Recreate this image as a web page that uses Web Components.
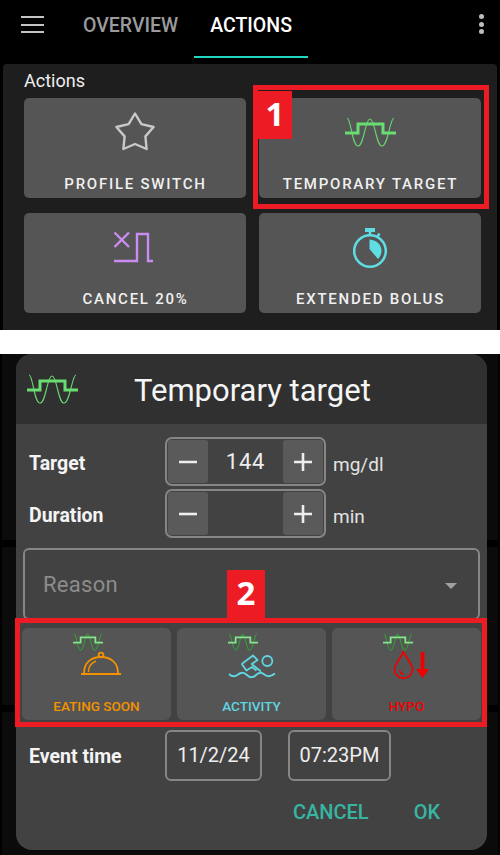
<!DOCTYPE html>
<html>
<head>
<meta charset="utf-8">
<title>Temporary target</title>
<style>
  html, body { margin: 0; background: #000; }
  body { width: 500px; height: 855px; overflow: hidden; position: relative; font-family: Roboto, "Liberation Sans", sans-serif; }
  .gap { height: 24px; background: #fff; }
</style>
</head>
<body>
<top-bar></top-bar>
<actions-panel>
  <action-card icon="star">PROFILE SWITCH</action-card>
  <action-card icon="tt">TEMPORARY TARGET</action-card>
  <action-card icon="cancel">CANCEL 20%</action-card>
  <action-card icon="timer">EXTENDED BOLUS</action-card>
</actions-panel>
<div class="gap"></div>
<tt-dialog>
  <preset-card icon="cloche" style="--accent:#f39200">EATING SOON</preset-card>
  <preset-card icon="swim" style="--accent:#5fd6e2">ACTIVITY</preset-card>
  <preset-card icon="hypo" style="--accent:#f00000">HYPO</preset-card>
</tt-dialog>
<call-out num="1" style="left:253px;top:85px;width:226px;height:114px"></call-out>
<call-out num="2" mode="above" style="left:15px;top:618px;width:462px;height:99px"></call-out>

<script>
// viewBox + inner svg for every drawn icon
const ICONS = {
  star: ['0 0 60 48', `<path d="M30 5.5 L36.4 16.2 L48.6 19 L40.4 28.4 L41.6 41 L30 36 L18.4 41 L19.6 28.4 L11.4 19 L23.6 16.2 Z" fill="none" stroke="#c9c9c9" stroke-width="2.4" stroke-linejoin="round"/>`],
  tt: ['0 0 60 48', `<g transform="translate(5 9)"><path d="M2 1 C6 1 7 29 13 29 C19 29 20 2 25 2 C30 2 31 29 37 29 C43 29 45 1 49 1" fill="none" stroke="#66d36e" stroke-width="1.2"/><path d="M0 16 H13 V7 H38 V16 H51" fill="none" stroke="#69dc72" stroke-width="3"/></g>`],
  cancel: ['0 0 60 48', `<g fill="none" stroke="#c98cf0" stroke-width="2.4"><path d="M9.5 9.5 L24 24 M24 9.5 L9.5 24"/><path d="M9 38 H32 V11 H43 V38 H48"/></g>`],
  timer: ['0 0 60 48', `<g fill="none" stroke="#5fdde5" stroke-width="2.5"><circle cx="30" cy="28" r="15.8"/><path d="M30 12 V8"/><path d="M37.5 13.5 L39.5 10.5"/></g><path d="M25 5 H35 V9 H25 Z" fill="#5fdde5"/><path d="M29.5 16.5 C37 17 41.5 22 41.5 28 C41.5 31 40 34 38 36 L29.5 26 Z" fill="#5fdde5"/>`],
  cloche: ['66 650 61 32', `<g fill="none" stroke="#f39200" stroke-width="1.8"><path d="M81 674 H121"/><path d="M84 673 C84 662 92 657 101 657 C110 657 118 662 118 673"/><circle cx="101" cy="655" r="2.4"/><path d="M88.5 672 C88.5 667 91 663 96 661" stroke-width="1.4"/></g>`],
  swim: ['221 650 61 32', `<g fill="none" stroke="#5fd6e2" stroke-width="1.8" stroke-linejoin="round"><circle cx="267.3" cy="661" r="5"/><path d="M241.7 664 L253 655.5 L257.5 660 L251.7 664 L261 671.5 M241.7 664 L246.5 670.5 L252 667 L256.5 670.5"/><path d="M229 674 C232 677 235 677 238 674.5 C241 672 244 672 247 675 C250 678 253 678 256 675 C259 672 262 672 265 675 C268 677 272 676 275 673.5"/></g>`],
  hypo: ['376 650 61 32', `<g fill="none" stroke="#f00000" stroke-width="1.7"><path d="M403.5 652 C399 660 394.5 665 394.5 669.5 A9 8.8 0 0 0 412.5 669.5 C412.5 665 408 660 403.5 652 Z"/><path d="M399.5 670 C400 672.5 402 674 404 674.5" stroke-width="1.3"/></g><path d="M420.6 652 H424.4 V669 H429 L422.5 678 L416 669 H420.6 Z" fill="#f00000"/>`]
};

class IconBox extends HTMLElement {
  connectedCallback() {
    const [box, inner] = ICONS[this.getAttribute('name')];
    const [, , w, h] = box.split(' ');
    this.attachShadow({ mode: 'open' });
    this.shadowRoot.innerHTML = `
      <style>:host { display: block; width: ${w}px; height: ${h}px; } svg { display: block; }</style>
      <svg width="${w}" height="${h}" viewBox="${box}">${inner}</svg>`;
  }
}

// the target/wave logo on its own, sized by attributes
class TtLogo extends HTMLElement {
  connectedCallback() {
    const w = this.getAttribute('w') || 51;
    const h = this.getAttribute('h') || 30;
    const line = this.getAttribute('line') || '#69dc72';
    const wave = this.getAttribute('wave') || '#66d36e';
    this.attachShadow({ mode: 'open' });
    this.shadowRoot.innerHTML = `
      <style>:host { display: block; width: ${w}px; height: ${h}px; } svg { display: block; }</style>
      <svg width="${w}" height="${h}" viewBox="0 0 51 30">
        <path d="M2 1 C6 1 7 29 13 29 C19 29 20 2 25 2 C30 2 31 29 37 29 C43 29 45 1 49 1" fill="none" stroke="${wave}" stroke-width="${this.getAttribute('wavew') || 1.2}"/>
        <path d="M0 16 H13 V7 H38 V16 H51" fill="none" stroke="${line}" stroke-width="3"/>
      </svg>`;
  }
}

class TopBar extends HTMLElement {
  connectedCallback() {
    this.attachShadow({ mode: 'open' });
    this.shadowRoot.innerHTML = `
      <style>
        :host { display: flex; height: 64px; background: #000; font: 500 19.5px Roboto, sans-serif; }
        .burger { width: 67px; box-sizing: border-box; padding: 16px 0 0 21px; display: flex; flex-direction: column; gap: 5.5px; }
        .burger i { display: block; width: 23px; height: 2px; background: #c4c4c4; }
        .tab { height: 58px; box-sizing: border-box; padding: 15px 16px 0; line-height: 22px; color: #9b9b9b; }
        .tab.on { color: #fff; border-bottom: 2px solid #1fd8c1; }
        .dots { margin-left: auto; padding: 14px 16px 0 0; display: flex; flex-direction: column; gap: 2.5px; }
        .dots i { display: block; width: 5px; height: 5px; border-radius: 50%; background: #bdbdbd; }
      </style>
      <div class="burger"><i></i><i></i><i></i></div>
      <div class="tab">OVERVIEW</div>
      <div class="tab on">ACTIONS</div>
      <div class="dots"><i></i><i></i><i></i></div>`;
  }
}

class ActionsPanel extends HTMLElement {
  connectedCallback() {
    this.attachShadow({ mode: 'open' });
    this.shadowRoot.innerHTML = `
      <style>
        :host { display: block; height: 266px; box-sizing: border-box; margin: 0 3px; padding: 6px 0 0 21px; background: #1e1e1e; border-radius: 4px 4px 0 0; }
        h2 { margin: 0; font: 400 18px/22px Roboto, sans-serif; color: #eee; }
        .grid { display: grid; grid-template-columns: 222px 222px; grid-auto-rows: 100px; column-gap: 13px; row-gap: 15px; margin-top: 6px; }
      </style>
      <h2>Actions</h2>
      <div class="grid"><slot></slot></div>`;
  }
}

class ActionCard extends HTMLElement {
  connectedCallback() {
    this.attachShadow({ mode: 'open' });
    this.shadowRoot.innerHTML = `
      <style>
        :host { display: flex; flex-direction: column; align-items: center; background: #555; border-radius: 5px; padding-top: 10px; box-sizing: border-box;
                font: 500 15px/16px Roboto, sans-serif; letter-spacing: 1.75px; color: #f0f0f0; }
        .label { margin-top: auto; padding: 0 0 6px 1px; }
      </style>
      <icon-box name="${this.getAttribute('icon')}"></icon-box>
      <div class="label"><slot></slot></div>`;
  }
}

class PresetCard extends HTMLElement {
  connectedCallback() {
    this.attachShadow({ mode: 'open' });
    this.shadowRoot.innerHTML = `
      <style>
        :host { display: flex; flex-direction: column; align-items: center; background: #555; border-radius: 6px; padding-top: 5px; box-sizing: border-box;
                font: 500 13.5px/16px Roboto, sans-serif; color: var(--accent); }
        tt-logo { margin-right: 18px; }
        icon-box { margin-top: -1px; }
        .label { margin-top: auto; padding-bottom: 6px; }
      </style>
      <tt-logo w="30" h="18" line="#86e48e" wave="#2fa332" wavew="1.8"></tt-logo>
      <icon-box name="${this.getAttribute('icon')}"></icon-box>
      <div class="label"><slot></slot></div>`;
  }
}

class NumStepper extends HTMLElement {
  connectedCallback() {
    const value = this.getAttribute('value') || '';
    this.attachShadow({ mode: 'open' });
    this.shadowRoot.innerHTML = `
      <style>
        :host { display: flex; width: 161px; height: 49px; box-sizing: border-box; border: 2px solid #868686; border-radius: 7px; padding: 1px; font: 400 22px/40px Roboto, sans-serif; color: #eee; }
        .btn { width: 40px; background: #5a5a5a; border-radius: 3px; display: flex; align-items: center; justify-content: center; }
        .val { flex: 1; text-align: center; height: 43px; line-height: 43px; letter-spacing: .8px; }
        svg { display: block; }
      </style>
      <div class="btn"><svg width="18" height="18"><path d="M0 9 H18" stroke="#eee" stroke-width="2.6"/></svg></div>
      <div class="val">${value}</div>
      <div class="btn"><svg width="18" height="18"><path d="M0 9 H18 M9 0 V18" stroke="#eee" stroke-width="2.6"/></svg></div>`;
  }
}

class TtDialog extends HTMLElement {
  connectedCallback() {
    this.attachShadow({ mode: 'open' });
    this.shadowRoot.innerHTML = `
      <style>
        /* dim panels of the screen behind the dialog show at its sides */
        :host { display: block; height: 501px; box-sizing: border-box; padding-left: 16px;
                background: linear-gradient(#000 0 0) 0 186px / 100% 7px no-repeat, linear-gradient(#000 0 0) 0 351px / 100% 7px no-repeat, linear-gradient(#0b0b0b 0 0) 2px 0 / 496px 100% no-repeat, #000;
                font-family: Roboto, sans-serif; color: #fff; }
        .box { width: 471px; height: 496px; border-radius: 16px; overflow: hidden; background: #424242; }
        header { height: 70px; background: #303030; display: flex; align-items: center; padding-left: 11px; }
        h1 { margin: 0 0 0 56px; padding-top: 3px; font: 400 31px/40px Roboto, sans-serif; color: #f5f5f5; }
        .row { display: flex; align-items: center; }
        .row b { width: 149px; padding: 4px 0 0 13px; box-sizing: border-box; font: 700 19.5px Roboto, sans-serif; color: #f4f4f4; }
        .unit { margin-left: 7px; font-size: 19px; color: #e2e2e2; padding-top: 5px; }
        .r1 { margin-top: 13px; }
        .r2 { margin-top: 3px; }
        .reason { height: 72px; box-sizing: border-box; margin: 10px 7px 0; border: 2px solid #868686; border-radius: 6px; padding: 0 18px; display: flex; align-items: flex-start; font-size: 22px; line-height: 70px; color: #8c8c8c; letter-spacing: .3px; }
        .reason i { margin: 33px 3px 0 auto; width: 0; height: 0; border: 6px solid transparent; border-top: 6px solid #a0a0a0; border-bottom: 0; }
        .presets { display: grid; grid-template-columns: repeat(3, 149px); column-gap: 6px; grid-auto-rows: 92px; margin: 8px 0 0 6px; }
        .event { margin-top: 10px; }
        .event b { padding-top: 2px; }
        .pick { height: 51px; box-sizing: border-box; border: 2px solid #868686; border-radius: 6px; font-size: 20px; line-height: 47px; text-align: center; color: #eee; }
        .date { width: 97px; }
        .time { width: 103px; margin-left: 26px; }
        footer { display: flex; margin-top: 19px; padding-left: 277px; font: 500 20px/24px Roboto, sans-serif; color: #38b5a2; }
        footer span + span { margin-left: 45px; }
      </style>
      <div class="box">
        <header><tt-logo></tt-logo><h1>Temporary target</h1></header>
        <div class="row r1"><b>Target</b><num-stepper value="144"></num-stepper><span class="unit">mg/dl</span></div>
        <div class="row r2"><b>Duration</b><num-stepper></num-stepper><span class="unit">min</span></div>
        <div class="reason">Reason<i></i></div>
        <div class="presets"><slot></slot></div>
        <div class="row event"><b>Event time</b><div class="pick date">11/2/24</div><div class="pick time">07:23PM</div></div>
        <footer><span>CANCEL</span><span>OK</span></footer>
      </div>`;
  }
}

// red annotation frame with its number tag; lies over the screenshot content
class CallOut extends HTMLElement {
  connectedCallback() {
    const above = this.getAttribute('mode') === 'above';
    this.attachShadow({ mode: 'open' });
    this.shadowRoot.innerHTML = `
      <style>
        :host { position: absolute; display: block; border: 5px solid #ed1c24; }
        .tag { position: absolute; box-sizing: border-box; padding-bottom: 4px; background: #ed1c24; color: #fff; font: 700 33px/1 "Open Sans", sans-serif; display: flex; align-items: center; justify-content: center; }
        .in { left: 0; top: 1px; width: 34px; height: 48px; }
        .up { left: 207px; top: -53px; width: 38px; height: 48px; }
      </style>
      <div class="tag ${above ? 'up' : 'in'}">${this.getAttribute('num')}</div>`;
  }
}

customElements.define('icon-box', IconBox);
customElements.define('tt-logo', TtLogo);
customElements.define('top-bar', TopBar);
customElements.define('actions-panel', ActionsPanel);
customElements.define('action-card', ActionCard);
customElements.define('preset-card', PresetCard);
customElements.define('num-stepper', NumStepper);
customElements.define('tt-dialog', TtDialog);
customElements.define('call-out', CallOut);
</script>
</body>
</html>
